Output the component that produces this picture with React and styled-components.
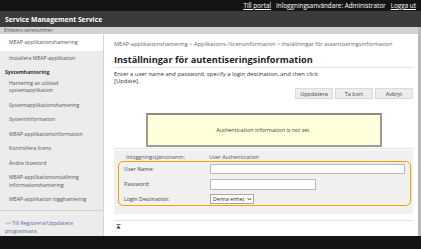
import React from "react";
import styled, { createGlobalStyle } from "styled-components";

const Global = createGlobalStyle`
  html, body {
    margin: 0;
    padding: 0;
    width: 421px;
    height: 249px;
    overflow: hidden;
    background: #111;
    font-family: "Open Sans", "DejaVu Sans", sans-serif;
  }
  * {
    box-sizing: border-box;
  }
`;

const Page = styled.div`
  display: flex;
  flex-direction: column;
  width: 421px;
  height: 249px;
`;

const TopBar = styled.div`
  height: 11px;
  background: #141414;
  display: flex;
  justify-content: flex-end;
  align-items: center;
  gap: 5px;
  padding-right: 5px;
  font-size: 6.35px;
  color: #fff;
  a {
    color: #fff;
    text-decoration: underline;
  }
`;

const Header = styled.div`
  height: 16px;
  background: #3b3b3b;
  color: #fff;
  display: flex;
  align-items: center;
  padding-left: 5px;
  font-weight: 700;
  font-size: 6.8px;
`;

const SerialStrip = styled.div`
  height: 7px;
  background: #d3d3d3;
  color: #555;
  font-size: 4.4px;
  line-height: 7px;
  padding-left: 4px;
  border-right: 3px solid #b9b9b9;
`;

const Body = styled.div`
  display: flex;
  height: 202px;
`;

const Sidebar = styled.div`
  width: 104px;
  background: #ececec;
  border-right: 1px solid #d6d6d6;
  display: flex;
  flex-direction: column;
`;

const NavItem = styled.div`
  padding: ${(p) => (p.$active ? "5px 9px 4.5px" : "3.5px 9px")};
  line-height: 7.5px;
  font-size: 5.2px;
  color: #555;
  background: ${(p) => (p.$active ? "#fff" : "transparent")};
`;

const NavHeader = styled.div`
  padding: 3px 5px 0;
  line-height: 7.5px;
  font-size: 5.2px;
  font-weight: 700;
  color: #333;
`;

const BackLink = styled.div`
  margin-top: 3px;
  border-top: 1px solid #d2d2d2;
  padding: 8px 5px 0;
  line-height: 8px;
  font-size: 5.2px;
  color: #5a6a9a;
`;

const Main = styled.div`
  flex: 1;
  background: #fff;
  border-right: 3px solid #b9b9b9;
  padding: 7px 5px 0 10px;
  display: flex;
  flex-direction: column;
  color: #333;
`;

const Breadcrumb = styled.div`
  font-size: 5.6px;
  line-height: 7px;
  color: #666;
  white-space: nowrap;
`;

const Title = styled.h1`
  margin: 6px 0 0;
  font-size: 9.2px;
  line-height: 11px;
  font-weight: 700;
  color: #222;
  padding-bottom: 2px;
  border-bottom: 1px solid #e4e4e4;
`;

const Desc = styled.p`
  margin: 3px 0 0;
  font-size: 5.85px;
  line-height: 7px;
  color: #333;
  white-space: nowrap;
`;

const ButtonRow = styled.div`
  display: flex;
  justify-content: flex-end;
  gap: 2px;
  margin-top: 3px;
`;

const Button = styled.button`
  width: 38px;
  height: 11px;
  padding: 0;
  background: #ececec;
  border: 1px solid #dadada;
  font-family: inherit;
  font-size: 5.5px;
  color: #444;
`;

const Notice = styled.div`
  align-self: center;
  width: 236px;
  height: 34px;
  margin-top: 14px;
  background: #ffffd9;
  border: 2px solid #9a9a9a;
  border-top-color: #8a8a8a;
  display: flex;
  align-items: center;
  justify-content: center;
  font-size: 5.45px;
  color: #444;
`;

const Divider = styled.div`
  height: 1px;
  background: #e2e2e2;
  margin-top: ${(p) => p.$gap || 0}px;
`;

const Panel = styled.div`
  background: #f0f0f0;
  padding: 3px 2px 8px 4px;
  margin-top: 1px;
`;

const ServiceRow = styled.div`
  display: grid;
  grid-template-columns: 83px 1fr;
  padding-left: 8px;
  font-size: 5.4px;
  line-height: 8px;
  color: #555;
`;

const FormBox = styled.div`
  border: 1.5px solid #f5a300;
  border-radius: 5px;
  padding: 2px 3px 0.5px 5px;
  display: flex;
  flex-direction: column;
  gap: 4.5px;
`;

const FormRow = styled.div`
  display: grid;
  grid-template-columns: 86px 1fr;
  align-items: center;
  font-size: 5.4px;
  color: #444;
`;

const TextInput = styled.input`
  width: ${(p) => p.$w}px;
  height: ${(p) => p.$h || 10}px;
  border: 1px solid #b8b8b8;
  background: #fff;
  padding: 0;
  margin: 0;
`;

const SelectBox = styled.div`
  width: 44px;
  height: 10px;
  border: 1px solid #a8a8a8;
  background: #fff;
  display: flex;
  align-items: center;
  justify-content: space-between;
  padding: 0 1.5px 0 2px;
  font-size: 5.2px;
  color: #222;
  white-space: nowrap;
`;

const TopIcon = styled.div`
  margin-top: 2px;
  padding-left: 2px;
  height: 8px;
  display: flex;
  align-items: center;
`;

const BottomBar = styled.div`
  flex: 1;
  background: #141414;
`;

const navItems = [
  "Systemapplikationshantering",
  "Systeminformation",
  "MEAP-applikationsinformation",
  "Kontrollera licens",
  "Ändra lösenord",
];

export default function App() {
  return (
    <Page>
      <Global />
      <TopBar>
        <a>Till portal</a>
        <span>Inloggningsanvändare: Administrator</span>
        <a>Logga ut</a>
      </TopBar>
      <Header>Service Management Service</Header>
      <SerialStrip>Enhetens serienummer:</SerialStrip>
      <Body>
        <Sidebar>
          <NavItem $active>MEAP-applikationshantering</NavItem>
          <NavItem>Installera MEAP-applikation</NavItem>
          <NavHeader>Systemhantering</NavHeader>
          <NavItem>
            Hantering av utökad
            <br />
            systemapplikation
          </NavItem>
          {navItems.map((e) => (
            <NavItem key={e}>{e}</NavItem>
          ))}
          <NavItem>
            MEAP-applikationsinställning
            <br />
            informationshantering
          </NavItem>
          <NavItem>MEAP-applikation logghantering</NavItem>
          <BackLink>
            &lt;&lt; Till Registrera/Uppdatera
            <br />
            programvara
          </BackLink>
        </Sidebar>
        <Main>
          <Breadcrumb>
            MEAP-applikationshantering &gt; Applikations-/licensinformation &gt;
            Inställningar för autentiseringsinformation
          </Breadcrumb>
          <Title>Inställningar för autentiseringsinformation</Title>
          <Desc>
            Enter a user name and password, specify a login destination, and then click
            <br />
            [Update].
          </Desc>
          <ButtonRow>
            <Button>Uppdatera</Button>
            <Button>Ta bort</Button>
            <Button>Avbryt</Button>
          </ButtonRow>
          <Notice>Authentication information is not set.</Notice>
          <Divider $gap={1} />
          <Panel>
            <ServiceRow>
              <span>Inloggningstjänstnamn:</span>
              <span>User Authentication</span>
            </ServiceRow>
            <FormBox>
              <FormRow>
                <span>User Name:</span>
                <TextInput $w={195} />
              </FormRow>
              <FormRow>
                <span>Password:</span>
                <TextInput $w={106} $h={11} type="password" />
              </FormRow>
              <FormRow>
                <span>Login Destination:</span>
                <SelectBox>
                  <span>Denna enhet</span>
                  <svg width="5" height="4" viewBox="0 0 5 4">
                    <path d="M0.5 1 L2.5 3 L4.5 1" stroke="#333" strokeWidth="0.9" fill="none" />
                  </svg>
                </SelectBox>
              </FormRow>
            </FormBox>
          </Panel>
          <Divider $gap={6} />
          <TopIcon>
            <svg width="5" height="5" viewBox="0 0 5 5">
              <rect x="0.5" y="0.3" width="4" height="0.8" fill="#333" />
              <path d="M2.5 1.6 L4.5 4.6 L0.5 4.6 Z" fill="#333" />
            </svg>
          </TopIcon>
        </Main>
      </Body>
      <BottomBar />
    </Page>
  );
}
